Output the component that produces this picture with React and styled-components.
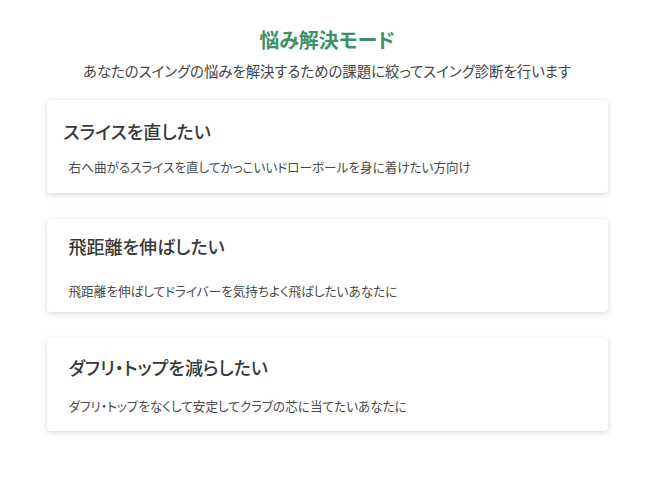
import React from 'react'
import styled, { createGlobalStyle } from "styled-components";

const GlobalStyle = createGlobalStyle`
    body {
        margin: 0;
        background: #ffffff;
        font-family: "Noto Sans CJK JP", "Noto Sans", sans-serif;
        font-feature-settings: "palt";
    }
`

// top: space above the title, gap: space between title and text
const modes = [
    {
        title: "スライスを直したい",
        text: "右へ曲がるスライスを直してかっこいいドローボールを身に着けたい方向け",
        indent: 17,
        top: 18,
        gap: 13,
    },
    {
        title: "飛距離を伸ばしたい",
        text: "飛距離を伸ばしてドライバーを気持ちよく飛ばしたいあなたに",
        indent: 22,
        top: 14,
        gap: 22,
    },
    {
        title: "ダフリ・トップを減らしたい",
        text: "ダフリ・トップをなくして安定してクラブの芯に当てたいあなたに",
        indent: 22,
        top: 16,
        gap: 16,
    },
];

const App = () => {
    return (
        <>
            <GlobalStyle />
            <Page>
                <Header>
                    <h1>悩み解決モード</h1>
                    <p>あなたのスイングの悩みを解決するための課題に絞ってスイング診断を行います</p>
                </Header>
                <List>
                    {modes.map((mode, index) => (
                        <Card key={index} $top={mode.top}>
                            <CardTitle $indent={mode.indent}>{mode.title}</CardTitle>
                            <CardText $gap={mode.gap}>{mode.text}</CardText>
                        </Card>
                    ))}
                </List>
            </Page>
        </>
    )
}

const Page = styled.div`
    width: 561px;
    margin: 0 auto;
    padding: 26px 0 40px;
    transform: translateX(-3px);
`

const Header = styled.div`
    text-align: center;
    h1 {
        margin: 0;
        font-size: 20px;
        line-height: 28px;
        font-weight: 700;
        color: #3f8f68;
    }
    p {
        margin: 6px 0 0;
        font-size: 14.4px;
        line-height: 22px;
        color: #444444;
    }
`

const List = styled.div`
    display: flex;
    flex-direction: column;
    gap: 26px;
    margin-top: 18px;
`

const Card = styled.div`
    height: 93px;
    box-sizing: border-box;
    padding: ${(p) => p.$top}px 22px 0;
    background: #ffffff;
    border-radius: 4px;
    box-shadow: 0 2px 6px rgba(0, 0, 0, 0.14), 0 0 2px rgba(0, 0, 0, 0.06);
    display: flex;
    flex-direction: column;
`

const CardTitle = styled.h3`
    margin: 0 0 0 ${(p) => p.$indent - 22}px;
    font-size: 18px;
    line-height: 26px;
    font-weight: 500;
    color: #383838;
`

const CardText = styled.p`
    margin: ${(p) => p.$gap}px 0 0;
    font-size: 12.6px;
    line-height: 20px;
    color: #4a4a4a;
`

export default App
